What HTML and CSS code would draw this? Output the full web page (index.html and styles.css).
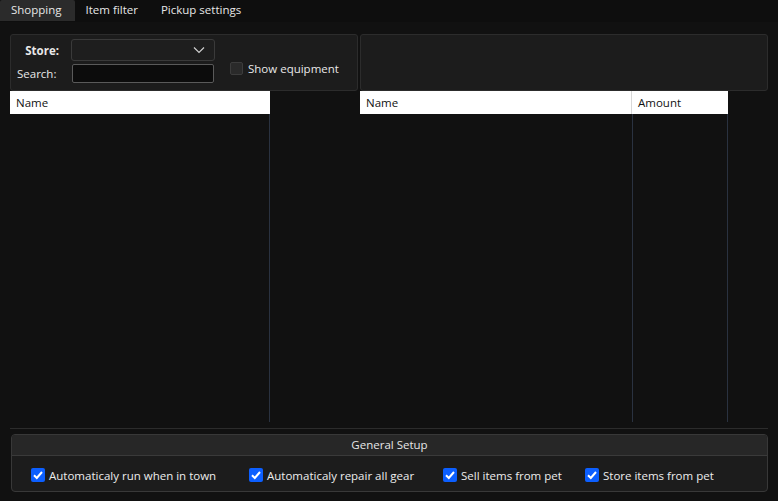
FILE: index.html
```html
<!DOCTYPE html>
<html>
<head>
<meta charset="utf-8">
<link rel="stylesheet" href="styles.css">
</head>
<body>
<div class="tabs">
  <div class="tab active">Shopping</div>
  <div class="tab">Item filter</div>
  <div class="tab">Pickup settings</div>
</div>
<div class="content">
  <div class="toprow">
    <div class="panel left-panel">
      <div class="fields">
        <div class="field">
          <span class="lbl bold">Store:</span>
          <div class="combo">
            <svg class="chev" width="12" height="8" viewBox="0 0 12 8"><path d="M1 1.5 L6 6.5 L11 1.5" fill="none" stroke="#cfcfcf" stroke-width="1.2"/></svg>
          </div>
        </div>
        <div class="field">
          <span class="lbl">Search:</span>
          <div class="input"></div>
        </div>
      </div>
      <label class="check-off"><span class="box"></span>Show equipment</label>
    </div>
    <div class="panel right-panel"></div>
  </div>
  <div class="lists">
    <div class="list list-left">
      <div class="head"><div class="col col-name">Name</div></div>
      <div class="body"><div class="bcol bcol-left"></div></div>
    </div>
    <div class="list list-right">
      <div class="head">
        <div class="col col-name2">Name</div>
        <div class="col col-amount">Amount</div>
      </div>
      <div class="body">
        <div class="bcol bcol-name2"></div>
        <div class="bcol bcol-amount"></div>
      </div>
    </div>
  </div>
  <div class="sep"></div>
  <div class="group">
    <div class="group-head">General Setup</div>
    <div class="group-body">
      <label class="check c1"><span class="cbox"><svg width="14" height="14" viewBox="0 0 14 14"><path d="M3 7.2 L5.8 10 L11 4" fill="none" stroke="#fff" stroke-width="2"/></svg></span>Automaticaly run when in town</label>
      <label class="check c2"><span class="cbox"><svg width="14" height="14" viewBox="0 0 14 14"><path d="M3 7.2 L5.8 10 L11 4" fill="none" stroke="#fff" stroke-width="2"/></svg></span>Automaticaly repair all gear</label>
      <label class="check c3"><span class="cbox"><svg width="14" height="14" viewBox="0 0 14 14"><path d="M3 7.2 L5.8 10 L11 4" fill="none" stroke="#fff" stroke-width="2"/></svg></span>Sell items from pet</label>
      <label class="check c4"><span class="cbox"><svg width="14" height="14" viewBox="0 0 14 14"><path d="M3 7.2 L5.8 10 L11 4" fill="none" stroke="#fff" stroke-width="2"/></svg></span>Store items from pet</label>
    </div>
  </div>
</div>
</body>
</html>
```
FILE: styles.css
```css
* { box-sizing: border-box; }
html, body { margin: 0; padding: 0; }
body {
  width: 778px;
  height: 501px;
  background: #111111;
  color: #e8e8e8;
  font-family: "Open Sans", "Noto Sans", sans-serif;
  font-size: 11.5px;
  overflow: hidden;
}
.tabs {
  display: flex;
  height: 22px;
  background: #0e0e0e;
}
.tab {
  height: 21px;
  line-height: 20px;
  padding: 0 11px;
  color: #e6e6e6;
}
.tab.active {
  background: #2b2b2b;
  border-radius: 2px 2px 0 0;
  padding: 0 13px 0 11px;
}
.tab:nth-child(2) { padding: 0 11px 0 11px; }
.tab:nth-child(3) { padding-left: 12px; }
.content {
  padding: 12px 10px 0 10px;
}
.toprow {
  display: flex;
  gap: 2px;
  height: 57px;
}
.panel {
  background: #1c1c1c;
  border: 1px solid #2c2c2c;
  border-radius: 3px;
}
.left-panel {
  width: 348px;
  display: flex;
  align-items: flex-start;
  padding: 4px 0 0 6px;
}
.right-panel { width: 408px; }
.fields {
  display: flex;
  flex-direction: column;
  gap: 3px;
}
.field {
  display: flex;
  align-items: center;
}
.lbl {
  width: 49px;
  text-align: right;
  margin-right: 6px;
}
.lbl.bold { font-weight: 700; width: 42px; margin-right: 12px; }
.field:nth-child(2) .lbl { text-align: left; width: 55px; margin-right: 0; }
.combo {
  width: 144px;
  height: 22px;
  border: 1px solid #3a3a3a;
  border-radius: 3px;
  background: #1e1e1e;
  position: relative;
}
.chev { position: absolute; right: 9px; top: 6px; }
.input {
  width: 142px;
  height: 19px;
  background: #0c0c0c;
  border: 1px solid #5a5a5a;
  border-radius: 2px;
}
.check-off {
  display: flex;
  align-items: center;
  margin: 22px 0 0 15px;
  color: #e8e8e8;
}
.check-off .box {
  width: 13px;
  height: 13px;
  background: #2a2a2a;
  border: 1px solid #3c3c3c;
  border-radius: 2px;
  margin-right: 5px;
}
.lists {
  display: flex;
  gap: 90px;
  height: 331px;
}
.list { display: flex; flex-direction: column; }
.list-left { width: 260px; }
.list-right { width: 368px; }
.head {
  height: 23px;
  background: #ffffff;
  color: #111;
  display: flex;
}
.col { line-height: 23px; padding-left: 6px; }
.col-name { flex: 1; }
.col-name2 { width: 272px; border-right: 1px solid #d8d8d8; }
.col-amount { flex: 1; }
.body { flex: 1; display: flex; }
.bcol { border-right: 1px solid #2a3240; height: 308px; }
.bcol-left { width: 260px; }
.bcol-name2 { width: 273px; }
.bcol-amount { width: 95px; }
.sep {
  height: 1px;
  background: #2c2c2c;
  margin-top: 6px;
  width: 758px;
}
.group {
  margin: 5px 0 0 1px;
  width: 757px;
  height: 58px;
  border: 1px solid #383838;
  border-radius: 4px;
  background: #1c1c1c;
  overflow: hidden;
}
.group-head {
  height: 21px;
  line-height: 20px;
  background: #272727;
  border-bottom: 1px solid #3a3a3a;
  text-align: center;
  color: #e6e6e6;
}
.group-body {
  display: flex;
  align-items: center;
  height: 35px;
  padding-left: 19px;
  padding-top: 3px;
}
.check {
  display: flex;
  align-items: center;
  color: #ececec;
}
.cbox {
  width: 14px;
  height: 14px;
  background: #0c5fff;
  border-radius: 2px;
  margin-right: 4px;
  display: flex;
}
.c1 { width: 218px; }
.c2 { width: 194px; }
.c3 { width: 142px; }
```
